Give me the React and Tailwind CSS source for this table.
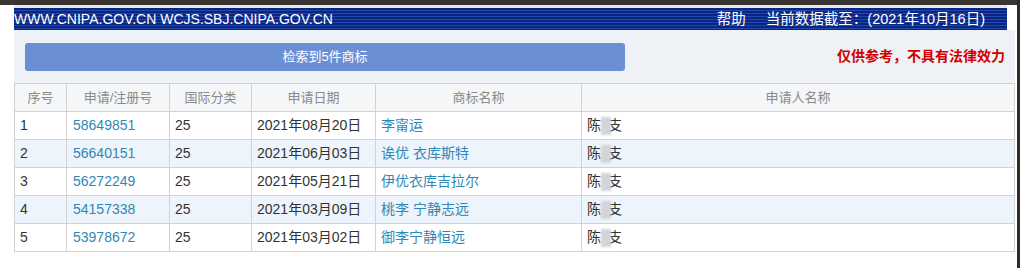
const rows = [
  { no: 1, reg: '58649851', cls: '25', date: '2021年08月20日', name: '李甯运' },
  { no: 2, reg: '56640151', cls: '25', date: '2021年06月03日', name: '诶优 衣库斯特' },
  { no: 3, reg: '56272249', cls: '25', date: '2021年05月21日', name: '伊优衣库吉拉尔' },
  { no: 4, reg: '54157338', cls: '25', date: '2021年03月09日', name: '桃李 宁静志远' },
  { no: 5, reg: '53978672', cls: '25', date: '2021年03月02日', name: '御李宁静恒远' },
];

const cols = ['w-[51px]', 'w-[103px]', 'w-[82px]', 'w-[124px]', 'w-[206px]', 'flex-1'];
const heads = ['序号', '申请/注册号', '国际分类', '申请日期', '商标名称', '申请人名称'];

export default function App() {
  return (
    <div
      className="w-[1020px] h-[268px] bg-white overflow-hidden border-r-[3px] border-[#2e2a27]"
      style={{ fontFamily: '"Liberation Sans", "Noto Sans CJK SC", sans-serif' }}
    >
      {/* top strip */}
      <div className="h-[5px] bg-[#3a3530]" />
      <div className="flex">
        <div className="w-[14px] shrink-0" />
        <div className="w-[1001px] shrink-0">
          {/* blue header */}
          <div className="h-[3px] w-[993px] bg-[#e6e9ec]" />
          <div className="flex h-[22px] w-[993px] items-center justify-between bg-[repeating-linear-gradient(180deg,#0a2482_0px,#0a2482_2px,#2149ac_2px,#2149ac_3px)] pr-[22px] text-[14px] leading-none text-white">
            <span>WWW.CNIPA.GOV.CN WCJS.SBJ.CNIPA.GOV.CN</span>
            <div className="flex gap-[20px] text-[14.5px]">
              <span>帮助</span>
              <span>当前数据截至：(2021年10月16日)</span>
            </div>
          </div>

          {/* search bar panel */}
          <div className="flex h-[53px] items-center justify-between bg-[#eef2f6] pl-[11px] pr-[10px]">
            <div className="flex h-[28px] w-[600px] items-center justify-center rounded-[3px] bg-[#6b8fd4] text-[13px] text-white">
              检索到5件商标
            </div>
            <span className="text-[14px] font-bold text-[#d40000]">仅供参考，不具有法律效力</span>
          </div>

          {/* table */}
          <div className="border-l border-r border-b border-[#d2d2d2]">
            <div className="flex h-[28px] border-t border-[#d2d2d2] bg-[#f4f6f8] text-[13px] text-[#8a8a8a]">
              {heads.map((h, i) => (
                <div
                  key={h}
                  className={`${cols[i]} flex items-center justify-center ${i > 0 ? 'border-l border-[#d2d2d2]' : ''}`}
                >
                  {h}
                </div>
              ))}
            </div>
            {rows.map((r, idx) => (
              <div
                key={r.no}
                className={`flex h-[28px] border-t border-[#d2d2d2] text-[14px] text-[#333] ${idx % 2 === 1 ? 'bg-[#eef4fb]' : 'bg-white'}`}
              >
                <div className={`${cols[0]} flex items-center pl-[5px]`}>{r.no}</div>
                <div className={`${cols[1]} flex items-center border-l border-[#d2d2d2] pl-[6px] text-[#2f88b5]`}>{r.reg}</div>
                <div className={`${cols[2]} flex items-center border-l border-[#d2d2d2] pl-[5px]`}>{r.cls}</div>
                <div className={`${cols[3]} flex items-center border-l border-[#d2d2d2] pl-[5px]`}>{r.date}</div>
                <div className={`${cols[4]} flex items-center border-l border-[#d2d2d2] pl-[5px] text-[#2f88b5]`}>{r.name}</div>
                <div className={`${cols[5]} flex items-center border-l border-[#d2d2d2] pl-[5px]`}>
                  <span>陈</span>
                  <span className="-mr-[3px] inline-block h-[18px] w-[10px] bg-[#d4d4d8] blur-[1px]" />
                  <span>支</span>
                </div>
              </div>
            ))}
          </div>
        </div>
      </div>
    </div>
  );
}
